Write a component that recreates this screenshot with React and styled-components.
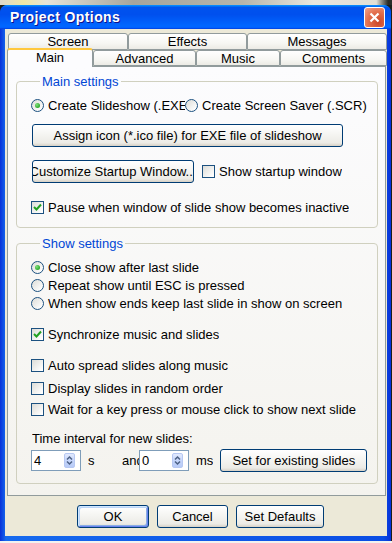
import React from "react";
import styled, { createGlobalStyle } from "styled-components";

const GlobalStyle = createGlobalStyle`
  html, body { margin: 0; padding: 0; }
  body {
    background: #1c1f1a;
    font-family: "Liberation Sans", Arial, sans-serif;
    font-size: 13px;
    color: #000;
  }
`;

const Screen = styled.div`
  width: 392px;
  height: 543px;
  display: flex;
  flex-direction: column;
  background: #1c1f1a;
  overflow: hidden;
`;

const DesktopStrip = styled.div`
  height: 5px;
  flex-shrink: 0;
  background: linear-gradient(90deg, #dcd9cc 0%, #f0e7a6 6%, #e6e3d8 12%, #a6a59c 34%, #b7b5ab 62%, #e8e6de 80%, #e1dfd6 96%, #2a2c28 99%);
`;

const Stage = styled.div`
  display: flex;
  flex: 1;
`;

const BottomStrip = styled.div`
  height: 2px;
  flex-shrink: 0;
  background: #f2f2f0;
`;

const Window = styled.div`
  width: 391px;
  height: 536px;
  display: flex;
  flex-direction: column;
  background: linear-gradient(90deg, #0831d9 0%, #166aee 1.5%, #0a4de4 98%, #0831d9 100%);
  border-radius: 8px 8px 0 0;
`;

const TitleBar = styled.div`
  height: 24px;
  flex-shrink: 0;
  display: flex;
  align-items: center;
  justify-content: space-between;
  padding: 0 6px 0 10px;
  border-radius: 7px 7px 0 0;
  background: linear-gradient(180deg, #0997ff 0%, #0053ee 10%, #0050ee 40%, #0066ff 85%, #0066ff 92%, #005bff 95%, #003dd7 100%);
`;

const Title = styled.span`
  color: #fff;
  font-weight: bold;
  font-size: 14px;
  letter-spacing: 0.4px;
  text-shadow: 1px 1px #0f1089;
`;

const CloseButton = styled.div`
  width: 21px;
  height: 21px;
  box-sizing: border-box;
  border: 1px solid #fff;
  border-radius: 3px;
  display: flex;
  align-items: center;
  justify-content: center;
  background: radial-gradient(circle at 70% 75%, #cc4626 0%, #e4714f 55%, #f1a48d 100%);
`;

const Client = styled.div`
  flex: 1;
  margin: 0 4px 5px 5px;
  background: #ece9d8;
  display: flex;
  flex-direction: column;
  padding-top: 4px;
`;

const TabRow = styled.div`
  display: flex;
  align-items: flex-end;
  height: ${(p) => p.$h}px;
  padding-left: ${(p) => p.$indent}px;
  position: relative;
  z-index: ${(p) => p.$z || 0};
`;

const Tab = styled.div`
  width: ${(p) => p.$w}px;
  height: ${(p) => (p.$active ? 19 : p.$back ? 17 : 16)}px;
  margin-bottom: ${(p) => (p.$active ? -1 : 0)}px;
  box-sizing: border-box;
  display: flex;
  align-items: center;
  justify-content: center;
  border: 1px solid #919b9c;
  border-bottom: ${(p) => (p.$active ? "none" : "1px solid #919b9c")};
  border-top: ${(p) => (p.$active ? "2px solid #ffc83c" : "1px solid #919b9c")};
  border-radius: 3px 3px 0 0;
  background: ${(p) =>
    p.$active
      ? "#fcfcfe"
      : "linear-gradient(180deg, #ffffff 0%, #f7f7f3 60%, #ecebe5 100%)"};
  padding-bottom: ${(p) => (p.$active ? 2 : 0)}px;
  white-space: nowrap;
`;

const Panel = styled.div`
  margin: 0 1px 0 2px;
  border: 1px solid #919b9c;
  background: linear-gradient(180deg, #fcfcfe 0%, #f4f3ee 100%);
  padding: 7px 7px 11px 8px;
`;

const Group = styled.fieldset`
  margin: ${(p) => p.$mt || 0}px 0 0 0;
  padding: 0 0 ${(p) => p.$pb}px 14px;
  border: 1px solid #d0d0bf;
  border-radius: 4px;
  min-width: 0;
`;

const Legend = styled.legend`
  margin-left: 9px;
  padding: 0 2px;
  color: #0046d5;
  line-height: 15px;
`;

const Row = styled.div`
  display: flex;
  align-items: center;
  height: ${(p) => p.$h || 18}px;
  margin-top: ${(p) => p.$mt || 0}px;
  white-space: nowrap;
`;

const Option = styled.label`
  display: flex;
  align-items: center;
  gap: 4px;
  flex-shrink: 0;
  width: ${(p) => (p.$w ? `${p.$w}px` : "auto")};
  margin-left: ${(p) => p.$ml || 0}px;
  overflow: hidden;
  white-space: nowrap;
`;

const RadioMark = styled.span`
  width: 13px;
  height: 13px;
  flex-shrink: 0;
  box-sizing: border-box;
  border-radius: 50%;
  border: 1px solid #1c5180;
  background: linear-gradient(135deg, #dcdcd7 0%, #ffffff 90%);
  display: flex;
  align-items: center;
  justify-content: center;
  &::after {
    content: "";
    display: ${(p) => (p.$on ? "block" : "none")};
    width: 5px;
    height: 5px;
    border-radius: 50%;
    background: radial-gradient(circle at 35% 35%, #80e07c 0%, #21a121 80%);
  }
`;

const CheckMark = styled.span`
  width: 13px;
  height: 13px;
  flex-shrink: 0;
  box-sizing: border-box;
  border: 1px solid #1c5180;
  background: linear-gradient(135deg, #dcdcd7 0%, #ffffff 90%);
  display: flex;
  align-items: center;
  justify-content: center;
`;

const Button = styled.div`
  width: ${(p) => p.$w}px;
  height: 23px;
  margin-left: ${(p) => p.$ml || 0}px;
  flex-shrink: 0;
  box-sizing: border-box;
  border: 1px solid #003c74;
  border-radius: 3px;
  background: linear-gradient(180deg, #ffffff 0%, #f6f6f3 40%, #ecebe6 85%, #d6d0c5 100%);
  box-shadow: ${(p) =>
    p.$default
      ? "inset 1px 1px 0 #cee7ff, inset -1px -1px 0 #6982ee, inset 2px 2px 0 #bcd4f6, inset -2px -2px 0 #89ade4"
      : "none"};
  display: flex;
  align-items: center;
  justify-content: center;
  overflow: hidden;
  white-space: nowrap;
`;

const Label = styled.span`
  flex-shrink: 0;
  width: ${(p) => (p.$w ? `${p.$w}px` : "auto")};
  margin-left: ${(p) => p.$ml || 0}px;
  overflow: hidden;
  white-space: nowrap;
`;

const SpinBox = styled.div`
  width: 50px;
  height: 21px;
  flex-shrink: 0;
  margin-left: ${(p) => p.$ml || 0}px;
  box-sizing: border-box;
  border: 1px solid #7f9db9;
  background: #fff;
  display: flex;
  align-items: center;
  justify-content: space-between;
  padding: 0 5px 0 2px;
`;

const SpinArrows = styled.div`
  width: 11px;
  height: 15px;
  box-sizing: border-box;
  border: 1px solid #b7c8f2;
  border-radius: 2px;
  background: linear-gradient(180deg, #e2eafe 0%, #c6d6fb 50%, #b8cbf7 100%);
  display: flex;
  align-items: center;
  justify-content: center;
`;

const Footer = styled.div`
  display: flex;
  gap: 8px;
  padding: 9px 0 0 72px;
`;

function Radio({ on, children, w, ml }) {
  return (
    <Option $w={w} $ml={ml}>
      <RadioMark $on={on} />
      {children}
    </Option>
  );
}

function Check({ on, children, ml }) {
  return (
    <Option $ml={ml}>
      <CheckMark>
        {on && (
          <svg width="9" height="9" viewBox="0 0 9 9">
            <path d="M1 4 L3.5 6.5 L8 1.5" stroke="#21a121" strokeWidth="2" fill="none" />
          </svg>
        )}
      </CheckMark>
      {children}
    </Option>
  );
}

function Spin({ value, ml }) {
  return (
    <SpinBox $ml={ml}>
      <span>{value}</span>
      <SpinArrows>
        <svg width="7" height="11" viewBox="0 0 7 11">
          <path d="M1 4.5 L3.5 2 L6 4.5" stroke="#4d6185" strokeWidth="1.5" fill="none" />
          <path d="M1 6.5 L3.5 9 L6 6.5" stroke="#4d6185" strokeWidth="1.5" fill="none" />
        </svg>
      </SpinArrows>
    </SpinBox>
  );
}

export default function App() {
  return (
    <Screen>
      <GlobalStyle />
      <DesktopStrip />
      <Stage>
        <Window>
          <TitleBar>
            <Title>Project Options</Title>
            <CloseButton>
              <svg width="11" height="11" viewBox="0 0 11 11">
                <path d="M1.5 1.5 L9.5 9.5 M9.5 1.5 L1.5 9.5" stroke="#fff" strokeWidth="2.2" />
              </svg>
            </CloseButton>
          </TitleBar>
          <Client>
            <TabRow $h={17} $indent={3}>
              <Tab $back $w={120}>Screen</Tab>
              <Tab $back $w={119}>Effects</Tab>
              <Tab $back $w={140}>Messages</Tab>
            </TabRow>
            <TabRow $h={16} $indent={2} $z={2}>
              <Tab $active $w={86}>Main</Tab>
              <Tab $w={103}>Advanced</Tab>
              <Tab $w={84}>Music</Tab>
              <Tab $w={107}>Comments</Tab>
            </TabRow>
            <Panel>
              <Group $pb={11}>
                <Legend>Main settings</Legend>
                <Row $mt={7}>
                  <Radio on w={154}>Create Slideshow (.EXE)</Radio>
                  <Radio>Create Screen Saver (.SCR)</Radio>
                </Row>
                <Row $h={23} $mt={10}>
                  <Button $w={311} $ml={1}>Assign icon (*.ico file) for EXE file of slideshow</Button>
                </Row>
                <Row $h={23} $mt={13}>
                  <Button $w={162} $ml={1}>Customize Startup Window...</Button>
                  <Check ml={8}>Show startup window</Check>
                </Row>
                <Row $mt={15}>
                  <Check on>Pause when window of slide show becomes inactive</Check>
                </Row>
              </Group>
              <Group $mt={8} $pb={11}>
                <Legend>Show settings</Legend>
                <Row $mt={7}>
                  <Radio on>Close show after last slide</Radio>
                </Row>
                <Row>
                  <Radio>Repeat show until ESC is pressed</Radio>
                </Row>
                <Row>
                  <Radio>When show ends keep last slide in show on screen</Radio>
                </Row>
                <Row $mt={13}>
                  <Check on>Synchronize music and slides</Check>
                </Row>
                <Row $mt={13}>
                  <Check>Auto spread slides along music</Check>
                </Row>
                <Row $mt={5}>
                  <Check>Display slides in random order</Check>
                </Row>
                <Row $mt={3}>
                  <Check>Wait for a key press or mouse click to show next slide</Check>
                </Row>
                <Row $mt={11}>
                  <Label $ml={1}>Time interval for new slides:</Label>
                </Row>
                <Row $h={23} $mt={2}>
                  <Spin value="4" />
                  <Label $ml={7} $w={34}>s</Label>
                  <Label $w={17}>and</Label>
                  <Spin value="0" />
                  <Label $ml={7}>ms</Label>
                  <Button $w={147} $ml={7}>Set for existing slides</Button>
                </Row>
              </Group>
            </Panel>
            <Footer>
              <Button $w={72} $default>OK</Button>
              <Button $w={71}>Cancel</Button>
              <Button $w={88}>Set Defaults</Button>
            </Footer>
          </Client>
        </Window>
      </Stage>
      <BottomStrip />
    </Screen>
  );
}
